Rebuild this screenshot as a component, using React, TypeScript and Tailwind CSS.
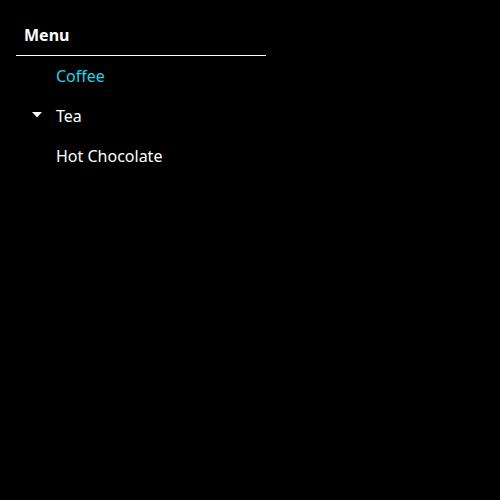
import { useState } from "react";

type Item = { label: string; expandable?: boolean };

const items: Item[] = [
  { label: "Coffee" },
  { label: "Tea", expandable: true },
  { label: "Hot Chocolate" },
];

const App = () => {
  const [selected, setSelected] = useState("Coffee");

  return (
    <div className="min-h-screen bg-black font-['Noto_Sans',sans-serif] text-white">
      <div className="w-[250px] ml-4 pt-[23px]">
        <div className="px-2 pb-2 text-base leading-6 font-bold border-b border-white">
          Menu
        </div>
        <ul>
          {items.map((item) => (
            <li
              key={item.label}
              onClick={() => setSelected(item.label)}
              className={`flex items-center h-10 pl-4 cursor-pointer text-base ${
                selected === item.label ? "text-[#22d3ee]" : "text-white"
              }`}
            >
              <span className="w-6 flex items-center">
                {item.expandable && (
                  <svg width="10" height="6" viewBox="0 0 10 6" className="mt-[-2px]">
                    <polygon points="0,0 10,0 5,5.5" fill="currentColor" />
                  </svg>
                )}
              </span>
              <span>{item.label}</span>
            </li>
          ))}
        </ul>
      </div>
    </div>
  );
};

export default App;
